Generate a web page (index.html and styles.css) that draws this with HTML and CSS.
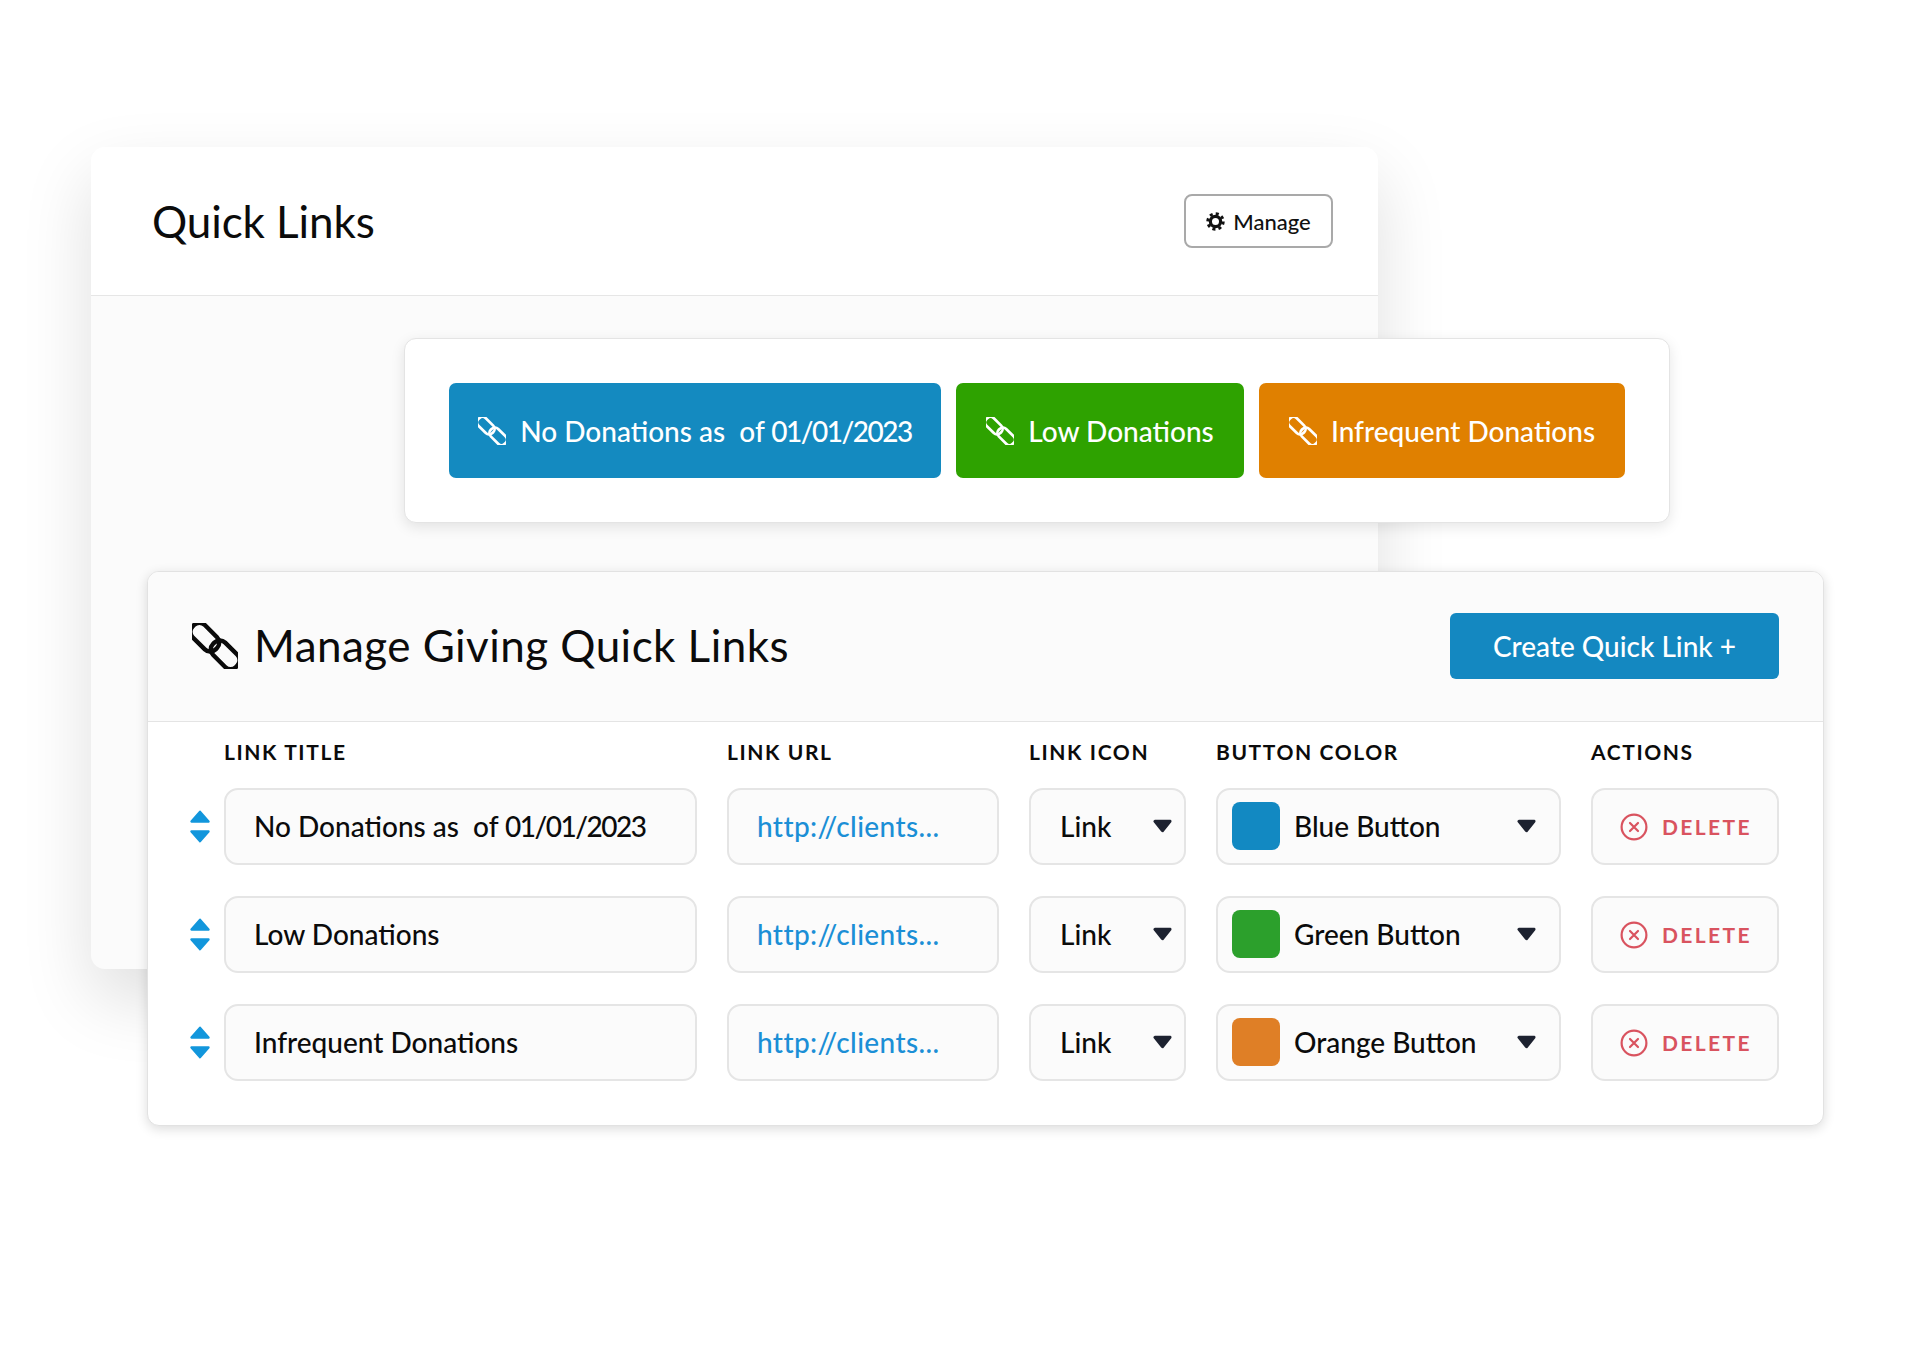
FILE: index.html
```html
<!DOCTYPE html>
<html lang="en">
<head>
    <meta charset="UTF-8">
    <meta name="viewport" content="width=device-width, initial-scale=1.0">
    <title>Manage Giving Quick Links</title>
    <link rel="stylesheet" href="styles.css">
</head>
<body>
    <svg class="defs" width="0" height="0">
        <symbol id="chain" viewBox="0 0 48 48">
            <g transform="rotate(-45 24 24)" fill="none" stroke="currentColor" stroke-width="4.6">
                <rect x="14" y="-7" width="18" height="34" rx="8"/>
                <rect x="16" y="21" width="18" height="34" rx="8"/>
            </g>
        </symbol>
        <symbol id="caret" viewBox="0 0 20 14">
            <path d="M2 2h16l-8 10z" fill="#1d2230" stroke="#1d2230" stroke-width="3" stroke-linejoin="round"/>
        </symbol>
        <symbol id="remove" viewBox="0 0 28 28">
            <circle cx="14" cy="14" r="12.4" fill="none" stroke="currentColor" stroke-width="2.2"/>
            <path d="M10 10l8 8M18 10l-8 8" fill="none" stroke="currentColor" stroke-width="2.2" stroke-linecap="round"/>
        </symbol>
        <symbol id="sort" viewBox="0 0 18 30">
            <path d="M9 1.5L16.8 10.5H1.2z" fill="#1296dc" stroke="#1296dc" stroke-width="2" stroke-linejoin="round"/>
            <path d="M1.2 19.5H16.8L9 28.5z" fill="#1296dc" stroke="#1296dc" stroke-width="2" stroke-linejoin="round"/>
        </symbol>
    </svg>

    <div class="stage">
        <section class="card back-card">
            <div class="back-head">
                <h2>Quick Links</h2>
                <button class="manage-btn">
                    <svg class="gear" viewBox="0 0 20 20">
                        <circle cx="10" cy="10" r="5.4" fill="none" stroke="#111" stroke-width="3.4"/>
                        <circle cx="10" cy="10" r="8.2" fill="none" stroke="#111" stroke-width="3" stroke-dasharray="3.2 3.24"/>
                    </svg>
                    Manage
                </button>
            </div>
            <div class="back-body"></div>
        </section>

        <section class="card links-card">
            <a class="quick-btn blue"><svg class="chain-sm"><use href="#chain"/></svg><span>No Donations as  of <span class="date">01/01/2023</span></span></a>
            <a class="quick-btn green"><svg class="chain-sm"><use href="#chain"/></svg><span>Low Donations</span></a>
            <a class="quick-btn orange"><svg class="chain-sm"><use href="#chain"/></svg><span>Infrequent Donations</span></a>
        </section>

        <section class="card manage-card">
            <div class="manage-head">
                <svg class="chain-lg"><use href="#chain"/></svg>
                <h2>Manage Giving Quick Links</h2>
                <button class="create-btn">Create Quick Link +</button>
            </div>
            <div class="manage-body">
                <div class="row labels">
                    <div>LINK TITLE</div>
                    <div>LINK URL</div>
                    <div>LINK ICON</div>
                    <div>BUTTON COLOR</div>
                    <div>ACTIONS</div>
                </div>

                <div class="row">
                    <svg class="sort"><use href="#sort"/></svg>
                    <div class="field"><span>No Donations as  of <span class="date">01/01/2023</span></span></div>
                    <div class="field url">http://clients...</div>
                    <div class="field select">Link<svg class="caret"><use href="#caret"/></svg></div>
                    <div class="field color"><i class="swatch sw-blue"></i>Blue Button<svg class="caret"><use href="#caret"/></svg></div>
                    <div class="field delete"><svg class="x"><use href="#remove"/></svg>DELETE</div>
                </div>

                <div class="row">
                    <svg class="sort"><use href="#sort"/></svg>
                    <div class="field">Low Donations</div>
                    <div class="field url">http://clients...</div>
                    <div class="field select">Link<svg class="caret"><use href="#caret"/></svg></div>
                    <div class="field color"><i class="swatch sw-green"></i>Green Button<svg class="caret"><use href="#caret"/></svg></div>
                    <div class="field delete"><svg class="x"><use href="#remove"/></svg>DELETE</div>
                </div>

                <div class="row">
                    <svg class="sort"><use href="#sort"/></svg>
                    <div class="field">Infrequent Donations</div>
                    <div class="field url">http://clients...</div>
                    <div class="field select">Link<svg class="caret"><use href="#caret"/></svg></div>
                    <div class="field color"><i class="swatch sw-orange"></i>Orange Button<svg class="caret"><use href="#caret"/></svg></div>
                    <div class="field delete"><svg class="x"><use href="#remove"/></svg>DELETE</div>
                </div>
            </div>
        </section>
    </div>
</body>
</html>
```

FILE: styles.css
```css
body {
    margin: 0;
    background-color: #ffffff;
    color: #0b0b0b;
    font-family: "Lato", "Noto Sans", sans-serif;
    font-weight: 500;
}
h2 {
    margin: 0;
    font-weight: 400;
}
button {
    font-family: inherit;
    font-weight: 500;
    cursor: pointer;
}
.defs {
    position: absolute;
}
.stage {
    position: relative;
    width: 1920px;
    height: 1349px;
    overflow: hidden;
}
.card {
    position: absolute;
    box-sizing: border-box;
}
.date {
    letter-spacing: -1.5px;
}

/* back window */
.back-card {
    left: 91px;
    top: 147px;
    width: 1287px;
    height: 822px;
    display: flex;
    flex-direction: column;
    background-color: #fbfbfb;
    border-radius: 14px;
    box-shadow: 0 30px 70px rgba(0, 0, 0, 0.13);
}
.back-head {
    height: 148px;
    flex-shrink: 0;
    display: flex;
    align-items: center;
    justify-content: space-between;
    padding: 0 45px 0 61px;
    background-color: #ffffff;
    border-bottom: 1px solid #e6e6e6;
    border-radius: 14px 14px 0 0;
}
.back-head h2 {
    font-size: 44px;
    letter-spacing: -0.1px;
}
.manage-btn {
    width: 149px;
    height: 54px;
    display: flex;
    align-items: center;
    justify-content: center;
    gap: 8px;
    padding: 0;
    background-color: #ffffff;
    border: 2px solid #a9a9a9;
    border-radius: 8px;
    color: #111111;
    font-size: 22px;
}
.gear {
    width: 19px;
    height: 19px;
}

/* quick link buttons */
.links-card {
    left: 404px;
    top: 338px;
    width: 1266px;
    height: 185px;
    display: flex;
    align-items: center;
    gap: 15px;
    padding: 0 44px;
    background-color: #ffffff;
    border: 1px solid #e4e4e4;
    border-radius: 12px;
    box-shadow: 0 4px 14px rgba(0, 0, 0, 0.1);
}
.quick-btn {
    height: 95px;
    flex-shrink: 0;
    display: flex;
    align-items: center;
    justify-content: center;
    gap: 14px;
    border-radius: 7px;
    color: #ffffff;
    font-size: 28px;
    white-space: pre;
}
.blue { width: 492px; background-color: #148ac0; }
.green { width: 288px; background-color: #2ea200; }
.orange { width: 366px; background-color: #e08000; }
.chain-sm {
    width: 28px;
    height: 28px;
    flex-shrink: 0;
}

/* manage window */
.manage-card {
    left: 147px;
    top: 571px;
    width: 1677px;
    height: 555px;
    background-color: #ffffff;
    border: 1px solid #e2e2e2;
    border-radius: 12px;
    box-shadow: 0 3px 12px rgba(0, 0, 0, 0.14);
    overflow: hidden;
}
.manage-head {
    height: 150px;
    box-sizing: border-box;
    display: flex;
    align-items: center;
    gap: 16px;
    padding: 0 44px 2px;
    background-color: #fbfbfb;
    border-bottom: 1px solid #e4e4e4;
}
.manage-head h2 {
    flex-grow: 1;
    padding-bottom: 1px;
    font-size: 44px;
    letter-spacing: 0.45px;
}
.chain-lg {
    width: 46px;
    height: 46px;
    flex-shrink: 0;
}
.create-btn {
    width: 329px;
    height: 66px;
    padding: 0;
    background-color: #1488c1;
    border: none;
    border-radius: 6px;
    color: #ffffff;
    font-size: 28px;
}

/* table */
.manage-body {
    padding-left: 76px;
}
.row {
    position: relative;
    display: grid;
    grid-template-columns: 473px 272px 157px 345px 188px;
    gap: 30px;
    margin-bottom: 31px;
}
.labels {
    height: 58px;
    align-items: center;
    margin-bottom: 8px;
    font-size: 21px;
    font-weight: 700;
    letter-spacing: 1.6px;
}
.sort {
    position: absolute;
    left: -34px;
    top: 22px;
    width: 20px;
    height: 33px;
}
.field {
    height: 77px;
    box-sizing: border-box;
    display: flex;
    align-items: center;
    padding: 0 28px 2px;
    background-color: #fbfbfb;
    border: 2px solid #e5e5e5;
    border-radius: 14px;
    font-size: 28px;
    white-space: pre;
}
.url {
    color: #1b8fd6;
    letter-spacing: 0.4px;
}
.caret {
    width: 19px;
    height: 14px;
    margin-left: auto;
}
.select {
    padding: 0 12px 2px 29px;
}
.color {
    padding: 0 23px 2px 14px;
}
.swatch {
    width: 48px;
    height: 48px;
    margin-right: 14px;
    border-radius: 8px;
}
.sw-blue { background-color: #1289c2; }
.sw-green { background-color: #2ca02c; }
.sw-orange { background-color: #df7f26; }
.delete {
    justify-content: center;
    gap: 14px;
    padding: 0 0 0 2px;
    color: #d9535f;
    font-size: 21px;
    font-weight: 700;
    letter-spacing: 2.4px;
}
.x {
    width: 28px;
    height: 28px;
}
```
